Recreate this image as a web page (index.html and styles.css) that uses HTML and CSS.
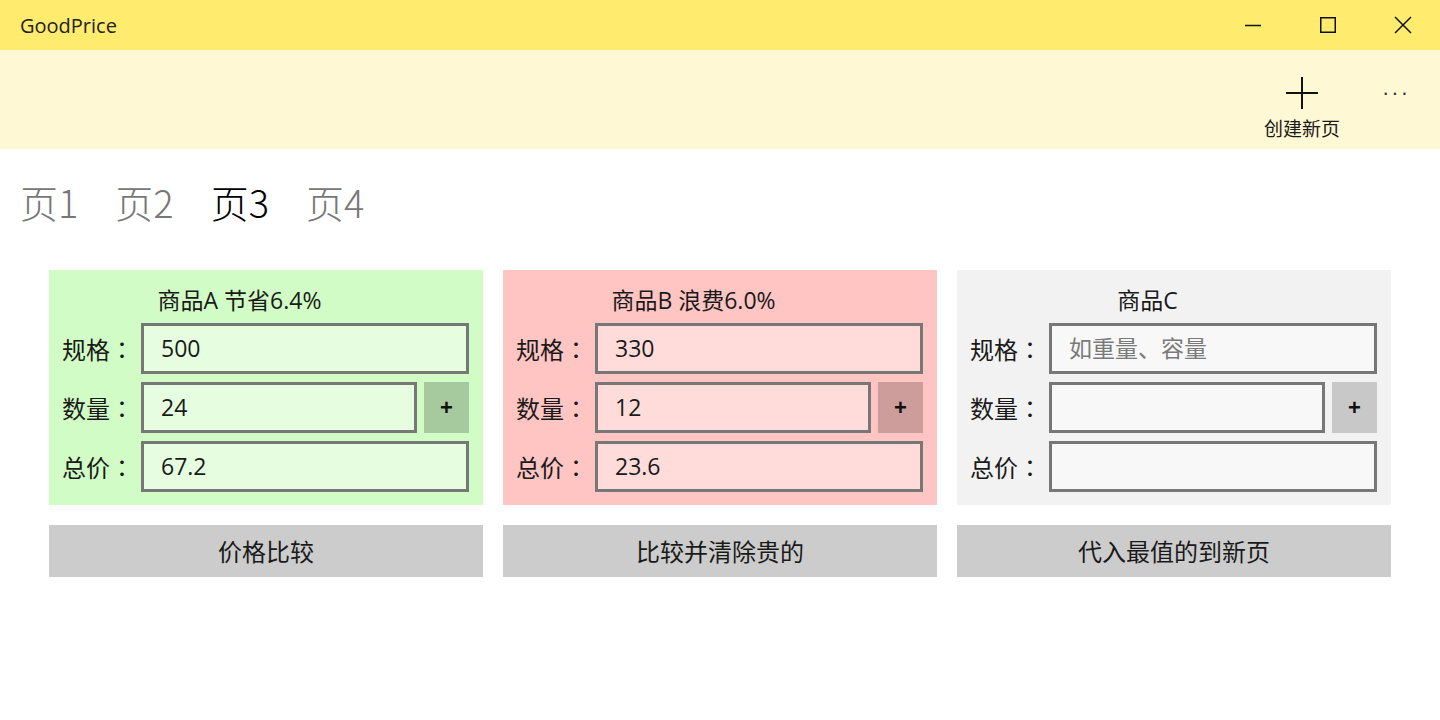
FILE: index.html
```html
<!DOCTYPE html>
<html lang="zh-CN">
<head>
    <meta charset="UTF-8">
    <meta name="viewport" content="width=device-width, initial-scale=1.0">
    <title>GoodPrice</title>
    <link rel="stylesheet" href="styles.css">
</head>
<body>
    <div class="titlebar">
        <span class="app-name">GoodPrice</span>
        <div class="window-controls">
            <span class="win-btn">
                <svg width="18" height="18" viewBox="0 0 18 18"><path d="M1 9.5h16" stroke="#111" stroke-width="1.5"/></svg>
            </span>
            <span class="win-btn">
                <svg width="18" height="18" viewBox="0 0 18 18"><rect x="1.75" y="1.75" width="14.5" height="14.5" fill="none" stroke="#111" stroke-width="1.5"/></svg>
            </span>
            <span class="win-btn">
                <svg width="18" height="18" viewBox="0 0 18 18"><path d="M1 1l16 16M17 1L1 17" stroke="#111" stroke-width="1.5"/></svg>
            </span>
        </div>
    </div>

    <div class="commandbar">
        <button class="app-btn">
            <svg width="34" height="34" viewBox="0 0 34 34"><path d="M17 1v32M1 17h32" stroke="#111" stroke-width="2"/></svg>
            <span>创建新页</span>
        </button>
        <button class="more-btn">&middot;&middot;&middot;</button>
    </div>

    <div class="pivot">
        <nav class="pivot-headers">
            <span class="pivot-item">页1</span>
            <span class="pivot-item">页2</span>
            <span class="pivot-item active">页3</span>
            <span class="pivot-item">页4</span>
        </nav>

        <div class="columns">
            <div class="column">
                <div class="card card-good">
                    <div class="card-title">商品A 节省6.4%</div>
                    <label class="field-label">规格<span class="colon">：</span></label>
                    <input class="field wide" type="text" value="500" placeholder="如重量、容量">
                    <label class="field-label">数量<span class="colon">：</span></label>
                    <input class="field" type="text" value="24">
                    <button class="plus-btn">+</button>
                    <label class="field-label">总价<span class="colon">：</span></label>
                    <input class="field wide" type="text" value="67.2">
                </div>
                <button class="action-btn">价格比较</button>
            </div>

            <div class="column">
                <div class="card card-bad">
                    <div class="card-title">商品B 浪费6.0%</div>
                    <label class="field-label">规格<span class="colon">：</span></label>
                    <input class="field wide" type="text" value="330" placeholder="如重量、容量">
                    <label class="field-label">数量<span class="colon">：</span></label>
                    <input class="field" type="text" value="12">
                    <button class="plus-btn">+</button>
                    <label class="field-label">总价<span class="colon">：</span></label>
                    <input class="field wide" type="text" value="23.6">
                </div>
                <button class="action-btn">比较并清除贵的</button>
            </div>

            <div class="column">
                <div class="card card-empty">
                    <div class="card-title">商品C</div>
                    <label class="field-label">规格<span class="colon">：</span></label>
                    <input class="field wide" type="text" placeholder="如重量、容量">
                    <label class="field-label">数量<span class="colon">：</span></label>
                    <input class="field" type="text">
                    <button class="plus-btn">+</button>
                    <label class="field-label">总价<span class="colon">：</span></label>
                    <input class="field wide" type="text">
                </div>
                <button class="action-btn">代入最值的到新页</button>
            </div>
        </div>
    </div>
</body>
</html>
```

FILE: styles.css
```css
body {
    font-family: "Open Sans", "Noto Sans CJK SC", sans-serif;
    background-color: #fff;
    color: #1a1a1a;
    margin: 0;
    padding: 0;
}

.titlebar {
    height: 50px;
    background-color: #ffec6e;
    display: flex;
    align-items: center;
    justify-content: space-between;
}

.app-name {
    padding-left: 20px;
    font-size: 20px;
    color: #222;
}

.window-controls {
    display: flex;
    height: 100%;
}

.win-btn {
    width: 75px;
    display: flex;
    align-items: center;
    justify-content: center;
}

.commandbar {
    height: 99px;
    background-color: #fff8d4;
    display: flex;
    justify-content: flex-end;
    align-items: flex-start;
}

.app-btn {
    width: 100px;
    padding: 26px 0 0;
    background: none;
    border: none;
    display: flex;
    flex-direction: column;
    align-items: center;
    font-family: "Noto Sans CJK SC", sans-serif;
    font-size: 19px;
    color: #1a1a1a;
}

.app-btn span {
    margin-top: 5px;
    line-height: 26px;
}

.more-btn {
    width: 88px;
    padding: 28px 0 0;
    background: none;
    border: none;
    font-size: 22px;
    letter-spacing: 2px;
    color: #333;
    line-height: 30px;
}

.pivot-headers {
    display: flex;
    gap: 37px;
    padding: 26px 0 0 20px;
}

.pivot-item {
    font-family: "Noto Sans CJK SC", sans-serif;
    font-weight: 300;
    font-size: 38px;
    line-height: 54px;
    color: #777;
}

.pivot-item.active {
    color: #000;
}

.columns {
    display: grid;
    grid-template-columns: repeat(3, 1fr);
    column-gap: 20px;
    padding: 41px 49px 0;
}

.column {
    display: flex;
    flex-direction: column;
    gap: 20px;
}

.card {
    display: grid;
    grid-template-columns: 72px 1fr 45px;
    grid-template-rows: 30px repeat(3, 51px);
    column-gap: 7px;
    row-gap: 8px;
    padding: 15px 14px 13px 13px;
}

.card-title {
    grid-column: 1 / -1;
    padding-right: 52px;
    text-align: center;
    font-size: 23px;
    line-height: 30px;
    color: #1a1a1a;
    white-space: nowrap;
}

.field-label {
    display: flex;
    align-items: center;
    font-family: "Noto Sans CJK SC", sans-serif;
    font-size: 24px;
    color: #1a1a1a;
    white-space: nowrap;
}

.colon {
    font-family: "Noto Sans CJK JP", sans-serif;
}

.field {
    box-sizing: border-box;
    height: 51px;
    min-width: 0;
    border: 3px solid #777;
    padding: 0 0 2px 17px;
    font-family: inherit;
    font-size: 23px;
    color: #1a1a1a;
    outline: none;
}

.field.wide {
    grid-column: 2 / 4;
}

.field::placeholder {
    color: #7a7a7a;
}

.plus-btn {
    border: none;
    font-size: 22px;
    font-weight: bold;
    color: #111;
    padding: 0;
}

.card-good {
    background-color: #d2fcc5;
}

.card-good .field {
    background-color: #e6fedf;
}

.card-good .plus-btn {
    background-color: #a6c99d;
}

.card-bad {
    background-color: #ffc5c3;
}

.card-bad .field {
    background-color: #ffdcda;
}

.card-bad .plus-btn {
    background-color: #cc9d9b;
}

.card-empty {
    background-color: #f2f2f2;
}

.card-empty .field {
    background-color: #f8f8f8;
}

.card-empty .plus-btn {
    background-color: #c8c8c8;
}

.action-btn {
    height: 52px;
    border: none;
    background-color: #cccccc;
    font-family: "Noto Sans CJK SC", sans-serif;
    font-size: 24px;
    color: #1a1a1a;
    padding: 0 0 2px;
}
```
